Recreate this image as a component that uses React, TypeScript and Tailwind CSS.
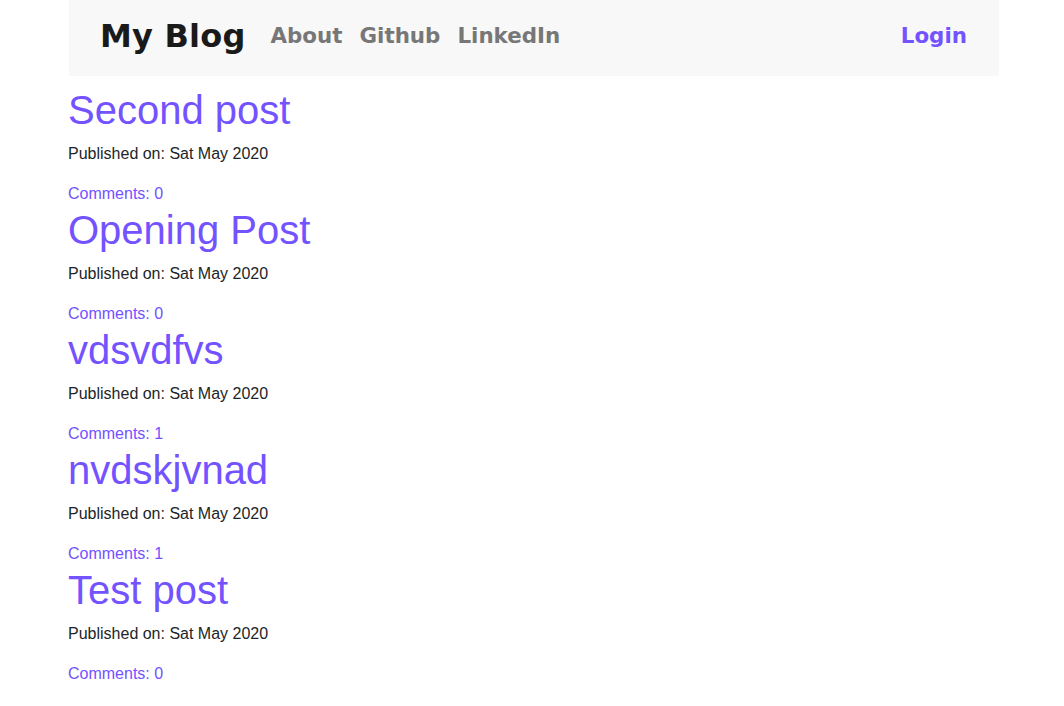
import React from "react";

const posts = [
  { title: "Second post", comments: 0 },
  { title: "Opening Post", comments: 0 },
  { title: "vdsvdfvs", comments: 1 },
  { title: "nvdskjvnad", comments: 1 },
  { title: "Test post", comments: 0 },
];

export default function App() {
  return (
    <div className="min-h-[706px] bg-white" style={{ fontFamily: '"Liberation Sans", Arial, sans-serif' }}>
      <div className="ml-[69px] w-[930px]">
        <nav
          className="flex h-[76px] items-center bg-[#f8f8f8] pb-[5px] pl-[31px] pr-[32px]"
          style={{ fontFamily: '"DejaVu Sans", sans-serif' }}
        >
          <span className="text-[32px] font-bold leading-none text-[#1a1a1a] tracking-[0.2px]">My Blog</span>
          <div className="ml-[25px] flex gap-[17px] text-[21.4px] font-bold leading-none text-[#777777]">
            <span>About</span>
            <span>Github</span>
            <span>LinkedIn</span>
          </div>
          <span className="ml-auto text-[21.4px] font-bold leading-none text-[#7352ff]">Login</span>
        </nav>
        <div className="-ml-px pt-[10px]">
          {posts.map((p) => (
            <div key={p.title}>
              <h1 className="mb-2 text-[40px] font-normal leading-[48px] text-[#7352ff]">{p.title}</h1>
              <p className="mb-4 text-[16px] leading-[24px] text-[#212529]">Published on: Sat May 2020</p>
              <div className="text-[16px] leading-[24px] text-[#7352ff]">Comments: {p.comments}</div>
            </div>
          ))}
        </div>
      </div>
    </div>
  );
}
